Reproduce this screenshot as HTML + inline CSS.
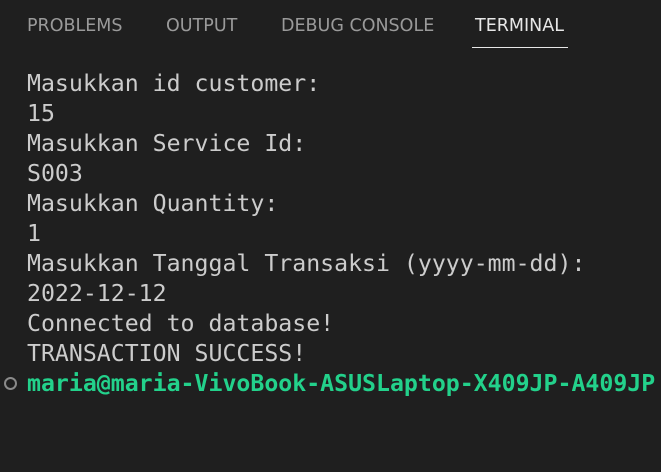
<!DOCTYPE html>
<html><head><style>
html,body{margin:0;padding:0;background:#1f1f1f;width:661px;height:472px;overflow:hidden}
.tabs{position:absolute;top:16px;left:27px;font-family:"DejaVu Sans","Liberation Sans",sans-serif;font-size:17.5px;color:#9a9a9a;white-space:nowrap;letter-spacing:0px}
.tabs span{position:absolute;top:0}
.ul{position:absolute;left:472px;top:47px;width:96px;height:1px;background:#e7e7e7}
.term{position:absolute;top:69px;left:27px;font-family:"DejaVu Sans Mono","Liberation Mono",monospace;font-size:23.2px;line-height:30px;color:#cccccc;white-space:pre}
.g{color:#23d18b;font-weight:bold}
.circ{position:absolute;left:4px;top:377px;width:9px;height:9px;border:2px solid #8a8a8a;border-radius:50%;box-sizing:content-box}
</style></head><body>
<div class="tabs"><span style="left:0">PROBLEMS</span><span style="left:139px">OUTPUT</span><span style="left:254px">DEBUG CONSOLE</span><span style="left:448px;color:#e7e7e7">TERMINAL</span></div>
<div class="ul"></div>
<div class="term">Masukkan id customer:
15
Masukkan Service Id:
S003
Masukkan Quantity:
1
Masukkan Tanggal Transaksi (yyyy-mm-dd):
2022-12-12
Connected to database!
TRANSACTION SUCCESS!
<span class="g">maria@maria-VivoBook-ASUSLaptop-X409JP-A409JP</span></div>
<div class="circ"></div>
</body></html>
